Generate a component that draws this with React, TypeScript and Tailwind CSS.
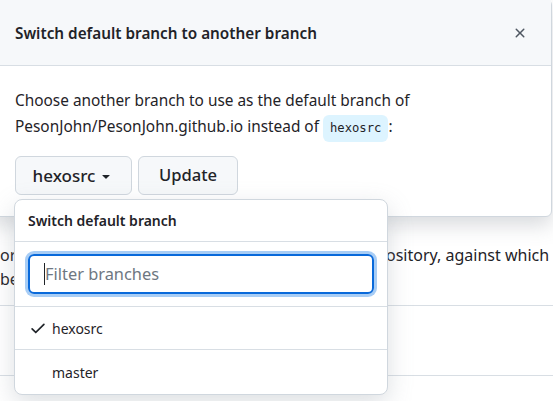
const font = { fontFamily: '"Noto Sans", "Segoe UI", sans-serif' };

function XIcon() {
  return (
    <svg width="16" height="16" viewBox="0 0 16 16" fill="#4f5761">
      <path d="M3.72 3.72a.75.75 0 0 1 1.06 0L8 6.94l3.22-3.22a.749.749 0 0 1 1.275.326.749.749 0 0 1-.215.734L9.06 8l3.22 3.22a.749.749 0 0 1-.326 1.275.749.749 0 0 1-.734-.215L8 9.06l-3.22 3.22a.751.751 0 0 1-1.042-.018.751.751 0 0 1-.018-1.042L6.94 8 3.72 4.78a.75.75 0 0 1 0-1.06Z" />
    </svg>
  );
}

function Caret() {
  return (
    <svg width="16" height="16" viewBox="0 0 16 16" fill="#1f2328">
      <path d="m4.427 7.427 3.396 3.396a.25.25 0 0 0 .354 0l3.396-3.396A.25.25 0 0 0 11.396 7H4.604a.25.25 0 0 0-.177.427Z" />
    </svg>
  );
}

function Check() {
  return (
    <svg width="18" height="18" viewBox="0 0 16 16" fill="#1f2328">
      <path d="M13.78 4.22a.75.75 0 0 1 0 1.06l-7.25 7.25a.75.75 0 0 1-1.06 0L2.22 9.28a.751.751 0 0 1 .018-1.042.751.751 0 0 1 1.042-.018L6 10.94l6.72-6.72a.75.75 0 0 1 1.06 0Z" />
    </svg>
  );
}

export default function App() {
  return (
    <div className="relative w-[553px] h-[401px] overflow-hidden bg-white text-[#1f2328]" style={font}>
      {/* page underneath */}
      <div className="pt-[243px] text-[16px] leading-6">
        <div className="flex whitespace-nowrap">
          <span className="w-[386px] shrink-0">ora</span>
          <span>ository, against which</span>
        </div>
        <div>be</div>
        <div className="mt-[14px] h-[71px] border-y border-[#d8dee4]" />
      </div>

      {/* dialog */}
      <div className="absolute left-[-8px] top-[-1px] w-[560px] rounded-md border border-[#d0d7de] bg-white shadow-[0_8px_20px_rgba(101,109,118,0.25)]">
        <div className="h-[66px] flex items-center justify-between pl-[22px] pr-[23px] bg-[#f6f8fa] border-b border-[#d8dee4]">
          <h1 className="text-[15.3px] font-semibold pt-[1px]">Switch default branch to another branch</h1>
          <XIcon />
        </div>
        <div className="pl-[22px] pr-4 pt-[22px] pb-[21px]">
          <p className="text-[15.4px] leading-[26px]">
            Choose another branch to use as the default branch of
            <br />
            PesonJohn/PesonJohn.github.io instead of{" "}
            <code className="inline-block rounded-md bg-[#ddf4ff] px-[7px] leading-[27px] text-[12.2px] text-[#1f2328]" style={{ fontFamily: '"DejaVu Sans Mono", monospace' }}>
              hexosrc
            </code>
            :
          </p>
          <div className="mt-[14px] flex gap-[6px]">
            <button className="h-[39px] w-[117px] flex items-center justify-center gap-[3px] rounded-md border border-[#d0d7de] bg-[#f6f8fa] text-[17px] font-medium">
              hexosrc
              <Caret />
            </button>
            <button className="h-[39px] w-[100px] rounded-md border border-[#d0d7de] bg-[#f6f8fa] text-[16.6px] font-medium">
              Update
            </button>
          </div>
        </div>
      </div>

      {/* branch menu */}
      <div className="absolute left-[14px] top-[199px] w-[374px] rounded-lg border border-[#d0d7de] bg-white shadow-[0_8px_24px_rgba(140,149,159,0.3)]">
        <div className="h-[42px] flex items-center px-[13px] border-b border-[#d8dee4] text-[14px] font-semibold">
          Switch default branch
        </div>
        <div className="px-[13px] py-[12px] border-b border-[#d8dee4]">
          <div className="h-[40px] flex items-center rounded-md border-2 border-[#0969da] ring-[3px] ring-[#a8cdf5] px-[14px]">
            <span className="w-[1px] h-[22px] bg-[#1f2328]" />
            <span className="text-[16.4px] text-[#6e7781]">Filter branches</span>
          </div>
        </div>
        <div className="h-[43px] flex items-center gap-[5px] pl-[14px] border-b border-[#d8dee4] text-[14px]">
          <Check />
          hexosrc
        </div>
        <div className="h-[44px] flex items-center pl-[37px] text-[14px]">master</div>
      </div>
    </div>
  );
}
